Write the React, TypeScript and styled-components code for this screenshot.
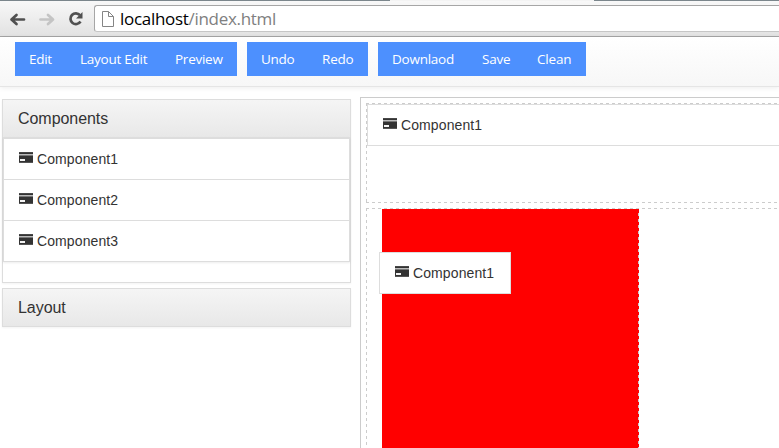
import React from "react";
import styled, { createGlobalStyle } from "styled-components";

const Global = createGlobalStyle`
  * { box-sizing: border-box; }
  html, body, #root { margin: 0; height: 100%; overflow: hidden; }
  body { background: #fff; color: #333; font: 14px/20px "Liberation Sans", Arial, sans-serif; }
`;

const Page = styled.div`
  width: 779px;
  height: 448px;
  overflow: hidden;
  display: flex;
  flex-direction: column;
`;

const TabStrip = styled.div`
  flex: none;
  display: flex;
  height: 1px;
  background: #7b868c;
`;

const ActiveTab = styled.div`
  margin-left: 390px;
  width: 204px;
  background: #f3f3f3;
`;

const BrowserBar = styled.div`
  flex: none;
  display: flex;
  align-items: flex-start;
  height: 36px;
  padding: 4px 0 0 9px;
  background: linear-gradient(#f8f8f8, #e2e2e2);
  border-bottom: 1px solid #a5a5a5;
`;

const NavIcons = styled.div`
  display: flex;
  width: 85px;
  padding-top: 5px;
  gap: 12px;
`;

const Address = styled.div`
  flex: 1;
  display: flex;
  align-items: center;
  height: 27px;
  padding: 0 0 0 7px;
  background: #fff;
  border: 1px solid #a6a6a6;
  border-bottom-color: #c6c6c6;
  border-right: 0;
  border-radius: 3px 0 0 3px;
`;

const Url = styled.span`
  margin-left: 6px;
  font: 17px/24px "Open Sans", sans-serif;
  letter-spacing: -0.3px;
  color: #808080;
  white-space: nowrap;
`;

const Host = styled.span`
  color: #000;
`;

const Toolbar = styled.div`
  flex: none;
  display: flex;
  gap: 10px;
  height: 50px;
  padding: 5px 15px 0;
  background: linear-gradient(#fff, #f7f7f7);
  border-bottom: 1px solid #e5e5e5;
  box-shadow: 0 1px 5px rgba(0, 0, 0, 0.075);
`;

const ButtonGroup = styled.div`
  display: flex;
  height: 34px;
  background: #4d90fe;
`;

const ToolButton = styled.button<{ $width: number; $spacing: number }>`
  width: ${(p) => p.$width}px;
  padding: 0 0 0 14px;
  border: 0;
  background: transparent;
  color: #fff;
  text-align: left;
  white-space: nowrap;
  font: 500 13.5px/34px "Open Sans", sans-serif;
  letter-spacing: ${(p) => p.$spacing}px;
`;

const Workspace = styled.div`
  flex: 1;
  display: flex;
  align-items: stretch;
  padding: 10px 0 0 2px;
`;

const Sidebar = styled.div`
  display: flex;
  flex-direction: column;
  gap: 5px;
  width: 349px;
  margin: 2px 9px 0 0;
`;

const Panel = styled.section<{ $height: number }>`
  height: ${(p) => p.$height}px;
  border: 1px solid #ddd;
  background: #fff;
  box-shadow: 0 1px 2px rgba(0, 0, 0, 0.05);
`;

const PanelTitle = styled.h3`
  margin: 0;
  height: 37px;
  padding-left: 15px;
  background: linear-gradient(#f5f5f5, #e8e8e8);
  font-size: 16px;
  font-weight: 400;
  line-height: 37px;
  letter-spacing: -0.05px;
`;

const List = styled.div`
  border: 1px solid #ddd;
  border-top-width: 2px;
  box-shadow: 0 1px 2px rgba(0, 0, 0, 0.075);
`;

const Item = styled.div`
  display: flex;
  align-items: center;
  gap: 4px;
  height: 40px;
  padding: 0 15px;
  letter-spacing: 0.1px;
  & + & {
    height: 41px;
    border-top: 1px solid #ddd;
  }
`;

const Canvas = styled.main`
  flex: 1;
  display: flex;
  flex-direction: column;
  gap: 5px;
  padding: 5px 0 0 5px;
  border: solid #ccc;
  border-width: 1px 0 0 1px;
`;

const dashX = "repeating-linear-gradient(90deg, #ccc 0 3px, transparent 3px 6px)";
const dashY = "repeating-linear-gradient(#ccc 0 3px, transparent 3px 6px)";

const DropRow = styled.div`
  flex: none;
  height: 100px;
  padding: 1px 0 0 1px;
  background: ${dashX} 0 0 / 100% 1px no-repeat,
    ${dashX} 0 100% / 100% 1px no-repeat,
    ${dashY} 0 0 / 1px 100% no-repeat;
`;

const GridRow = styled.div`
  flex: 1;
  display: flex;
  padding: 1px 0 0 16px;
  background: ${dashX} 0 0 / 100% 1px no-repeat,
    ${dashY} 0 0 / 1px 100% no-repeat;
`;

const RedColumn = styled.div`
  position: relative;
  width: 257px;
  background: ${dashY} 100% 4px / 1px 100% no-repeat, #f00;
`;

const Placed = styled.div`
  display: flex;
  align-items: center;
  gap: 4px;
  height: 42px;
  padding-left: 15px;
  background: #fff;
  border: 1px solid #ddd;
  border-right: 0;
  letter-spacing: 0.1px;
`;

const Dragged = styled(Placed)`
  position: absolute;
  left: -3px;
  top: 43px;
  width: 132px;
  border-right: 1px solid #ddd;
`;

const CardSvg = styled.svg`
  flex: none;
  display: block;
  margin-top: -3px;
`;

const CardIcon = () => (
  <CardSvg width="14" height="11" viewBox="0 0 14 11" shapeRendering="crispEdges">
    <path d="M0 0h14v11H0z" fill="#333" />
    <path d="M0 0h14v1H0z" fill="#484848" />
    <path d="M0 2h14v1H0z" fill="#bbb" />
    <path d="M0 3h14v1H0z" fill="#777" />
    <path d="M1 7h5v2H1z" fill="#f4f4f4" />
    <path d="M0 10h14v1H0z" fill="#555" />
  </CardSvg>
);

const groups: [string, number, number][][] = [
  [["Edit", 51, -0.3], ["Layout Edit", 95, -0.25], ["Preview", 76, -0.25]],
  [["Undo", 61, -0.3], ["Redo", 60, -0.2]],
  [["Downlaod", 90, -0.25], ["Save", 55, -0.2], ["Clean", 63, -0.2]],
];

export default function App() {
  return (
    <>
      <Global />
      <Page>
        <TabStrip><ActiveTab /></TabStrip>
        <BrowserBar>
          <NavIcons>
            <svg width="17" height="17" viewBox="0 0 17 17" fill="none" stroke="#505050" strokeWidth="2.7" strokeLinecap="round" strokeLinejoin="round">
              <path d="M3 9.5h12M7.5 5l-5 4.5 5 4.5" />
            </svg>
            <svg width="17" height="17" viewBox="0 0 17 17" fill="none" stroke="#c4c4c4" strokeWidth="2.7" strokeLinecap="round" strokeLinejoin="round">
              <path d="M2.5 9.5h12M10 5l5 4.5-5 4.5" />
            </svg>
            <svg width="17" height="17" viewBox="0 0 17 17">
              <path d="M13 5.2A5.4 5.4 0 1 0 13.5 11.5" fill="none" stroke="#505050" strokeWidth="2.7" />
              <path d="M15.5 2v6.5H9z" fill="#505050" />
            </svg>
          </NavIcons>
          <Address>
            <svg width="12" height="16" viewBox="0 0 12 16" fill="#fff" stroke="#858585">
              <path d="M.5.5h6l5 5v10H.5zM6.5.5v5h5" />
            </svg>
            <Url><Host>localhost</Host>/index.html</Url>
          </Address>
        </BrowserBar>
        <Toolbar>
          {groups.map((group, i) => (
            <ButtonGroup key={i}>
              {group.map(([label, width, spacing]) => (
                <ToolButton key={label} $width={width} $spacing={spacing}>{label}</ToolButton>
              ))}
            </ButtonGroup>
          ))}
        </Toolbar>
        <Workspace>
          <Sidebar>
            <Panel $height={184}>
              <PanelTitle>Components</PanelTitle>
              <List>
                {[1, 2, 3].map((n) => (
                  <Item key={n}><CardIcon /><span>Component{n}</span></Item>
                ))}
              </List>
            </Panel>
            <Panel $height={39}>
              <PanelTitle>Layout</PanelTitle>
            </Panel>
          </Sidebar>
          <Canvas>
            <DropRow>
              <Placed><CardIcon />Component1</Placed>
            </DropRow>
            <GridRow>
              <RedColumn>
                <Dragged><CardIcon />Component1</Dragged>
              </RedColumn>
            </GridRow>
          </Canvas>
        </Workspace>
      </Page>
    </>
  );
}
